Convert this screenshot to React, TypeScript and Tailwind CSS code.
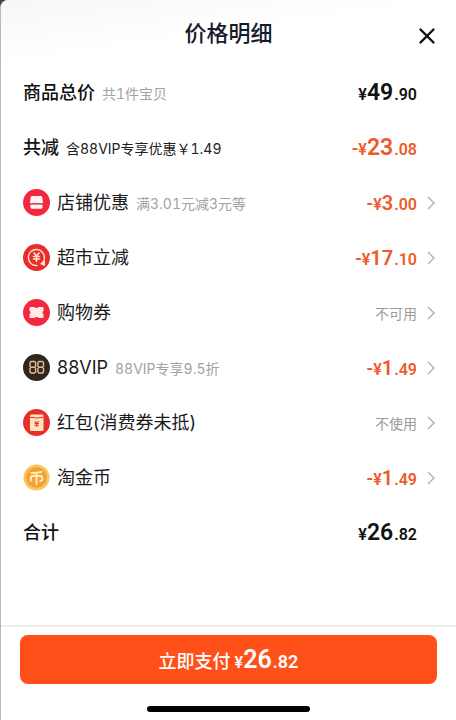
import type { ReactNode } from "react";

type PriceProps = { int: string; dec: string; negative?: boolean; size?: "md" | "lg" | "xl" };

const intSize = {
  md: "text-[20px]",
  lg: "text-[23px]",
  xl: "text-[25px]",
};

function Price({ int, dec, negative, size = "md" }: PriceProps) {
  return (
    <span className="flex items-baseline pt-0.5 font-[Roboto,'Noto_Sans_CJK_SC',sans-serif] font-semibold leading-7 whitespace-nowrap">
      {negative && <span className="text-[18px]">-</span>}
      <span className="text-[16px]">¥</span>
      <span className={intSize[size]}>{int}</span>
      <span className={size === "xl" ? "ml-px text-[18px]" : "ml-px text-[16px]"}>.{dec}</span>
    </span>
  );
}

function ShopIcon() {
  return (
    <svg viewBox="0 0 27 27" className="size-[27px]" aria-hidden="true">
      <circle cx="13.5" cy="13.5" r="13.5" fill="#f3283f" />
      <path d="M9 7h9q1 0 1.200 1l1 6.500H6.800L7.800 8Q8 7 9 7z" fill="#fff6f4" />
      <path d="M7.500 15h12v3.300q0 1.500-1.500 1.500H9q-1.500 0-1.500-1.500z" fill="#fff6f4" />
      <path d="M7 14.300q1.600 1.500 3.200 0 1.650 1.500 3.300 0 1.650 1.500 3.300 0 1.600 1.500 3.200 0" fill="none" stroke="#d9263f" strokeWidth="1.100" />
    </svg>
  );
}

function MarketIcon() {
  return (
    <svg viewBox="0 0 27 27" className="size-[27px]" aria-hidden="true">
      <circle cx="13.500" cy="13.500" r="13.500" fill="#e92d2b" />
      <g fill="none" stroke="#ffe4cf" strokeLinecap="round" strokeLinejoin="round">
        <path d="M14 21.500A8 8 0 1 1 21.200 15" strokeWidth="1.400" />
        <path d="M11 9l2.500 3.100L16 9M10.500 12.500h6M10.500 15h6M13.500 12.200v5.300" strokeWidth="1.600" />
      </g>
      <path d="M22 14.500v7.500l-5-2z" fill="#ffe4cf" />
    </svg>
  );
}

function CouponIcon() {
  return (
    <svg viewBox="0 0 27 27" className="size-[27px]" aria-hidden="true">
      <circle cx="13.500" cy="13.500" r="13.500" fill="#f3283f" />
      <path
        d="M7.500 8H11.500Q11.800 9 13.500 9T15.500 8H19.500Q20.500 8 20.500 9V12A1.600 1.600 0 0 0 20.500 15V18Q20.500 19 19.500 19H15.500Q15.200 18 13.500 18T11.500 19H7.500Q6.500 19 6.500 18V15A1.600 1.600 0 0 0 6.500 12V9Q6.500 8 7.500 8Z"
        fill="#ffece6"
      />
    </svg>
  );
}

function VipIcon() {
  return (
    <svg viewBox="0 0 27 27" className="size-[27px]" aria-hidden="true">
      <circle cx="13.500" cy="13.500" r="13.500" fill="#30251f" />
      <g fill="none" stroke="#e3bd92" strokeWidth="1.400" strokeLinejoin="round">
        <path d="M8 7.500h3.600l1 1v3.700l-1 1H8l-1-1V8.500zM8 13.200h3.600l1 1v3.800l-1 1H8l-1-1v-3.800z" />
        <path d="M15.900 7.500h3.600l1 1v3.700l-1 1h-3.600l-1-1V8.500zM15.900 13.200h3.600l1 1v3.800l-1 1h-3.600l-1-1v-3.800z" />
      </g>
    </svg>
  );
}

function RedPacketIcon() {
  return (
    <svg viewBox="0 0 27 27" className="size-[27px]" aria-hidden="true">
      <circle cx="13.500" cy="13.500" r="13.500" fill="#e92d2b" />
      <rect x="7" y="5.500" width="13.500" height="16.500" rx="1.500" fill="#ffe5bd" />
      <path d="M7 8.200q6.750 1.800 13.500 0" fill="none" stroke="#e92d2b" strokeWidth="1" />
      <path d="M11.700 12l2 2.300 2-2.300M11.500 14.500h4.400M11.500 16.200h4.400M13.700 14v4" fill="none" stroke="#df3b2c" strokeWidth="1.100" />
    </svg>
  );
}

function CoinIcon() {
  return (
    <svg viewBox="0 0 27 27" className="size-[27px]" aria-hidden="true">
      <circle cx="13.500" cy="13.500" r="13" fill="#fcc45c" />
      <circle cx="13.500" cy="13.500" r="10.300" fill="#f2a03a" />
      <path d="M18.500 7.800Q14 9.200 8.300 8.900M7.800 17v-3q0-2 2-2h7.400q2 0 2 2v1.800q0 1.200-2 1.200M13.500 9v11" fill="none" stroke="#ffedb4" strokeWidth="1.900" strokeLinecap="round" />
    </svg>
  );
}

function Chevron() {
  return (
    <svg viewBox="0 0 8 14" className="h-3.5 w-2" fill="none" stroke="#b0b0b0" strokeWidth="1.400" aria-hidden="true">
      <path d="M1 1l6 6-6 6" />
    </svg>
  );
}

function Note({ dark, children }: { dark?: boolean; children: ReactNode }) {
  return (
    <span className={`ml-[7px] text-[14px] tabular-nums ${dark ? "text-[#222]" : "text-[#a3a3a3]"}`}>
      {children}
    </span>
  );
}

type DetailProps = { icon: ReactNode; label: string; note?: string; children: ReactNode };

function DetailRow({ icon, label, note, children }: DetailProps) {
  return (
    <li>
      <button type="button" className="flex h-[55px] w-full items-center pr-[21px] pl-[22px] text-left">
        {icon}
        <span className="ml-[7px] flex items-baseline">
          <span className="text-[18px] leading-7 text-[#1b1b1b]">{label}</span>
          {note && <Note>{note}</Note>}
        </span>
        <span className="mr-2.5 ml-auto text-[#ee5a2a]">{children}</span>
        <Chevron />
      </button>
    </li>
  );
}

type SummaryProps = { label: string; note?: string; darkNote?: boolean; children: ReactNode };

function SummaryRow({ label, note, darkNote, children }: SummaryProps) {
  return (
    <li className="flex h-[55px] items-center pr-[39px] pl-[22px]">
      <span className="flex items-baseline">
        <span className="text-[18px] leading-7 font-medium">{label}</span>
        {note && <Note dark={darkNote}>{note}</Note>}
      </span>
      <span className="ml-auto">{children}</span>
    </li>
  );
}

function Unused({ children }: { children: ReactNode }) {
  return <span className="text-[14px] text-[#9b9b9b]">{children}</span>;
}

export default function App() {
  return (
    <div className="bg-[#444]">
      <main className="flex min-h-screen flex-col rounded-t-lg border-l border-[#b9b9b9] bg-white font-[Inter,'Noto_Sans_CJK_SC',sans-serif] text-[#111]">
        <header className="grid h-[65px] grid-cols-[1fr_auto_1fr] items-center rounded-tl-lg bg-linear-to-br from-[#f7f7f7] to-white to-50%">
          <h1 className="col-start-2 text-[22px] leading-8 font-medium text-[#151b2b]">价格明细</h1>
          <button type="button" aria-label="关闭" className="mt-1.5 mr-5 justify-self-end">
            <svg viewBox="0 0 18 18" className="size-[18px]" fill="none" stroke="#111" strokeWidth="2.400" strokeLinecap="round" aria-hidden="true">
              <path d="M2.500 2.500l13 13M15.500 2.500l-13 13" />
            </svg>
          </button>
        </header>

        <ul>
          <SummaryRow label="商品总价" note="共1件宝贝">
            <Price int="49" dec="90" size="lg" />
          </SummaryRow>
          <SummaryRow label="共减" note="含88VIP专享优惠￥1.49" darkNote>
            <span className="text-[#ee5a2a]">
              <Price int="23" dec="08" size="lg" negative />
            </span>
          </SummaryRow>
          <DetailRow icon={<ShopIcon />} label="店铺优惠" note="满3.01元减3元等">
            <Price int="3" dec="00" negative />
          </DetailRow>
          <DetailRow icon={<MarketIcon />} label="超市立减">
            <Price int="17" dec="10" negative />
          </DetailRow>
          <DetailRow icon={<CouponIcon />} label="购物券">
            <Unused>不可用</Unused>
          </DetailRow>
          <DetailRow icon={<VipIcon />} label="88VIP" note="88VIP专享9.5折">
            <Price int="1" dec="49" negative />
          </DetailRow>
          <DetailRow icon={<RedPacketIcon />} label="红包(消费券未抵)">
            <Unused>不使用</Unused>
          </DetailRow>
          <DetailRow icon={<CoinIcon />} label="淘金币">
            <Price int="1" dec="49" negative />
          </DetailRow>
          <SummaryRow label="合计">
            <Price int="26" dec="82" size="lg" />
          </SummaryRow>
        </ul>

        <footer className="mt-auto border-t-2 border-[#ebefeb] px-[19px] pt-2 pb-2">
          <button type="button" className="flex h-[49px] w-full items-center justify-center rounded-lg bg-[#ff5019] pt-0.5 text-white">
            <span className="flex items-baseline gap-1">
              <span className="text-[18px] font-medium">立即支付</span>
              <Price int="26" dec="82" size="xl" />
            </span>
          </button>
          <div className="mx-auto mt-[22px] h-1.5 w-[163px] rounded-full bg-black" />
        </footer>
      </main>
    </div>
  );
}
